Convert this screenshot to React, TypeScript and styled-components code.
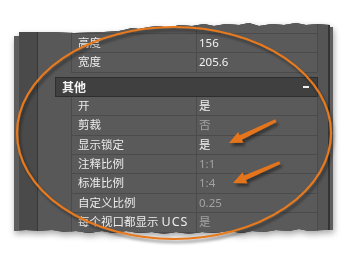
import React from "react";
import styled, { createGlobalStyle } from "styled-components";

type Row = { label: string; suffix?: string; value: string; dim?: boolean };

const TOP_ROWS: Row[] = [
  { label: "高度", value: "156" },
  { label: "宽度", value: "205.6" },
];

const OTHER_ROWS: Row[] = [
  { label: "开", value: "是" },
  { label: "剪裁", value: "否", dim: true },
  { label: "显示锁定", value: "是" },
  { label: "注释比例", value: "1:1", dim: true },
  { label: "标准比例", value: "1:4", dim: true },
  { label: "自定义比例", value: "0.25", dim: true },
  { label: "每个视口都显示 ", suffix: "UCS", value: "是", dim: true },
];

// torn paper edge, panel-local coordinates
const TORN = [
  "0 14px", "5px 14px", "5px 10px", "40px 10px", "60px 11px", "90px 10px",
  "105px 9px", "110px 8px", "118px 6px", "125px 7px", "135px 5px",
  "145px 4px", "155px 6px", "165px 3px", "178px 4px", "190px 2px",
  "200px 4px", "212px 2px", "225px 3px", "235px 1px", "245px 4px",
  "258px 2px", "270px 3px", "282px 1px", "292px 3px", "305px 2px",
  "316px 3px", "316px 5px", "319px 5px", "319px 208px", "310px 208px",
  "295px 209px", "285px 207px", "275px 209px", "262px 208px",
  "250px 210px", "238px 209px", "228px 211px", "215px 209px",
  "200px 211px", "188px 210px", "175px 212px", "162px 210px",
  "150px 212px", "138px 210px", "125px 211px", "112px 209px",
  "100px 211px", "88px 209px", "75px 211px", "62px 209px", "50px 210px",
  "38px 208px", "25px 209px", "12px 208px", "0 209px",
].join(", ");

const PropList = ({ rows }: { rows: Row[] }) => (
  <>
    {rows.map((r, i) => (
      <PropRow key={i}>
        <Label>
          {r.label}
          {r.suffix && <Latin>{r.suffix}</Latin>}
        </Label>
        <Value $dim={r.dim}>{r.value}</Value>
      </PropRow>
    ))}
  </>
);

const App = () => {
  return (
    <Stage>
      <GlobalStyle />
      <PanelShadow>
        <Panel>
          <Edge />
          <SideBar />
          <Content>
            <Rows>
              <CutRow>
                <Label />
                <Value />
              </CutRow>
              <PropList rows={TOP_ROWS} />
            </Rows>
            <Section>
              <SectionTitle>其他</SectionTitle>
              <Collapse />
            </Section>
            <Rows>
              <PropList rows={OTHER_ROWS} />
            </Rows>
          </Content>
          <ScrollTrack />
          <FrameLine />
          <FrameEdge />
        </Panel>
      </PanelShadow>

      <Callouts width="343" height="260" viewBox="0 0 343 260">
        <defs>
          <filter id="sh" x="-10%" y="-10%" width="130%" height="130%">
            <feDropShadow dx="2" dy="3" stdDeviation="1.6" floodColor="#000" floodOpacity="0.45" />
          </filter>
        </defs>
        <ellipse
          cx="174"
          cy="133"
          rx="157"
          ry="106"
          fill="none"
          stroke="#e8791c"
          strokeWidth="2.2"
          filter="url(#sh)"
        />
        <g fill="#e5741a" filter="url(#sh)">
          <polygon
            points="0,0 13,-6 13,-2.5 52,-1.5 52,1.5 13,2.5 13,6"
            transform="translate(229 143) rotate(-25.6)"
          />
          <polygon
            points="0,0 13,-6 13,-2.5 51,-1.5 51,1.5 13,2.5 13,6"
            transform="translate(233 183) rotate(-23.5)"
          />
        </g>
      </Callouts>
    </Stage>
  );
};

const GlobalStyle = createGlobalStyle`
  html, body {
    margin: 0;
    padding: 0;
    background: #ffffff;
    overflow: hidden;
  }
`;

const Stage = styled.div`
  position: relative;
  width: 343px;
  height: 260px;
  padding: 22px 0 0 14px;
  box-sizing: border-box;
  background: #ffffff;
  font-family: "Noto Sans", "Noto Sans CJK SC", sans-serif;
`;

const PanelShadow = styled.div`
  width: 319px;
  filter: drop-shadow(1px 3px 3px rgba(0, 0, 0, 0.35));
`;

const Panel = styled.div`
  display: flex;
  width: 319px;
  height: 214px;
  overflow: hidden;
  background: #585858;
  clip-path: polygon(${TORN});
`;

const Edge = styled.div`
  width: 5px;
  background: #5d5d5d;
`;

const SideBar = styled.div`
  width: 18px;
  background: #4a4a4a;
  border-right: 1px solid #383838;
`;

const Content = styled.div`
  width: 280px;
  display: flex;
  flex-direction: column;
  background: #585858;
`;

const Rows = styled.div`
  margin-left: 33px;
  border-left: 1px solid #4b4b4b;
  border-right: 1px solid #4b4b4b;
  background: #5a5a5a;
`;

const PropRow = styled.div`
  display: grid;
  grid-template-columns: 125px 1fr;
  height: 19.4px;
  box-sizing: border-box;
  border-bottom: 1px solid #4b4b4b;
  font-size: 11px;
  line-height: 18.4px;
  white-space: nowrap;
`;

const CutRow = styled(PropRow)`
  height: 12px;
`;

const Label = styled.div`
  padding-left: 6px;
  border-right: 1px solid #4b4b4b;
  color: #ececec;
  font-size: 11.5px;
  overflow: hidden;
`;

const Latin = styled.span`
  letter-spacing: 1px;
  font-size: 12.5px;
`;

const Value = styled.div<{ $dim?: boolean }>`
  padding-left: 2px;
  color: ${({ $dim }) => ($dim ? "#a2a2a2" : "#f2f2f2")};
  font-size: 11.5px;
`;

const Section = styled.div`
  display: flex;
  align-items: center;
  justify-content: space-between;
  margin: 4px 0 0 17px;
  height: 20px;
  box-sizing: border-box;
  padding: 0 8px 0 6px;
  background: #404040;
  border: 1px solid #2e2e2e;
`;

const SectionTitle = styled.span`
  color: #f4f4f4;
  font-weight: bold;
  font-size: 12px;
`;

const Collapse = styled.span`
  width: 6px;
  height: 2px;
  background: #f0f0f0;
`;

const ScrollTrack = styled.div`
  width: 10px;
  background: #555555;
`;

const FrameLine = styled.div`
  width: 2px;
  background: #343434;
`;

const FrameEdge = styled.div`
  width: 3px;
  background: #5e5e5e;
`;

const Callouts = styled.svg`
  position: absolute;
  left: 0;
  top: 0;
  pointer-events: none;
`;

export default App;
